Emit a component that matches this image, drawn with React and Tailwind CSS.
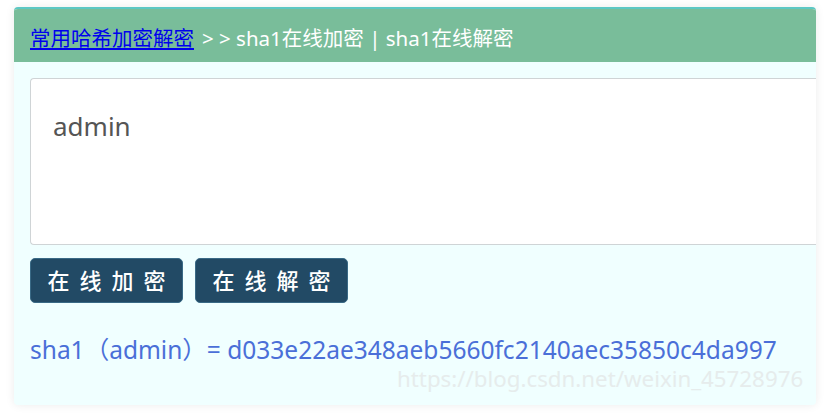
export default function App() {
  const font = { fontFamily: '"Noto Sans", "Noto Sans CJK SC", sans-serif' };
  return (
    <div className="h-[416px] w-[831px] bg-white pl-[14px] pt-[7px]" style={font}>
      <div className="flex h-[398px] w-[802px] flex-col overflow-hidden rounded-[4px] border-t-2 border-[#5cc8c4] bg-[#f0ffff] shadow-[0_0_10px_rgba(0,0,0,0.08)]">
        {/* header */}
        <div className="flex h-[53px] shrink-0 items-center bg-[#79bd9a] pl-[16px] pt-[6px] text-[20.5px] text-white">
          <a href="#" className="text-[#0000ee] underline">常用哈希加密解密</a>
          <span className="ml-[8px] whitespace-pre">&gt; &gt; sha1在线加密 | sha1在线解密</span>
        </div>

        {/* body */}
        <div className="flex flex-col pl-[16px] pt-[16px]">
          <textarea
            defaultValue="admin"
            className="h-[167px] w-full resize-none rounded-l-[4px] border border-r-0 border-[#cfd4d6] bg-white px-[22px] py-[31px] text-[26px] leading-[32px] text-[#555] outline-none"
          />
          <div className="mt-[13px] flex gap-[12px]">
            <button className="h-[45px] w-[153px] rounded-[5px] border border-[#3a6a86] bg-[#224a65] pl-[10px] text-[22px] font-medium tracking-[10px] text-white">
              在线加密
            </button>
            <button className="h-[45px] w-[153px] rounded-[5px] border border-[#3a6a86] bg-[#224a65] pl-[10px] text-[22px] font-medium tracking-[10px] text-white">
              在线解密
            </button>
          </div>
          <div className="mt-[32px] whitespace-nowrap text-[24.5px] leading-[30px] text-[#4a6fd8]">
            sha1（admin）= d033e22ae348aeb5660fc2140aec35850c4da997
          </div>
          <div className="mt-[1px] whitespace-nowrap pl-[367px] text-[22.3px] leading-[26px] text-[#e6ecec]">
            https://blog.csdn.net/weixin_45728976
          </div>
        </div>
      </div>
    </div>
  );
}
